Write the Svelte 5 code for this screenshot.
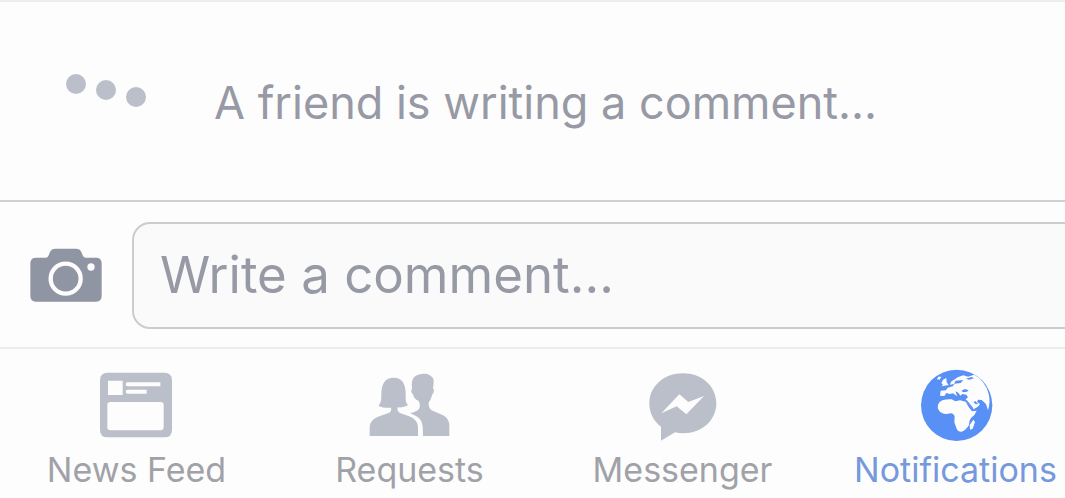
<script>
  let comment = $state('');
  let active = $state('Notifications');
  const tabs = ['News Feed', 'Requests', 'Messenger', 'Notifications'];
</script>

<main>
  <section class="typing" aria-live="polite">
    <svg class="dots" width="82" height="36" viewBox="0 0 82 36" aria-hidden="true">
      <circle cx="12" cy="12" r="10" />
      <circle cx="42" cy="18" r="10" />
      <circle cx="72" cy="25" r="10" />
    </svg>
    <p>A friend is writing a comment...</p>
  </section>

  <form class="composer" onsubmit={(e) => e.preventDefault()}>
    <button type="button" class="camera" aria-label="Add a photo">
      <svg width="72" height="56" viewBox="0 0 216 168" aria-hidden="true">
        <path d="M18 29h30q6 0 8-7l4-10Q64 2 76 2h62q12 0 16 10l4 10q2 7 9 7h31q17 0 17 17v98q0 17-17 17H18q-17 0-17-17V46q0-17 17-17z" />
        <circle class="lens" cx="107" cy="92" r="45" />
        <circle class="flash" cx="183" cy="57" r="11" />
      </svg>
    </button>
    <input type="text" aria-label="Write a comment" placeholder="Write a comment..." bind:value={comment} />
  </form>

  <nav>
    {#each tabs as tab}
      <button
        type="button"
        class:active={active === tab}
        aria-current={active === tab ? 'page' : undefined}
        onclick={() => (active = tab)}
      >
        {#if tab === 'News Feed'}
          <svg width="110" height="90" viewBox="6 0 330 270" aria-hidden="true">
            <path fill-rule="evenodd" d="M83 38h170q23 0 23 23v148q0 23-23 23H83q-23 0-23-23V61q0-23 23-23zM84 62v43h44V62zM143 67q-6 0-6 6t6 6h98V67zM143 89q-6 0-6 6t6 6h57V89zM91 126q-9 0-9 9v67q0 9 9 9h151q9 0 9-9v-67q0-9-9-9z" />
          </svg>
        {:else if tab === 'Requests'}
          <svg width="110" height="90" viewBox="0 0 330 270" aria-hidden="true">
            <path d="M44 228v-26c1-17 13-28 29-33l26-9c9-4 11-10 9-17-13 1-28 0-38-6 8-6 9-17 9-34 0-34 13-50 37-50 24 0 36 16 36 50 0 17 0 26 7 32-9 6-19 8-31 7-2 8 0 14 9 18l25 9c17 6 26 17 27 32v27z" />
            <path d="M204 228c0-31-1-45-15-56-8-6-16-8-24-13 12-2 21-5 27-12 4-6 3-17-1-24-10-4-16-11-17-20-6-3-7-12-3-17-3-31 5-42 34-45 15-1 22 6 27 11 6 7 4 20 2 33 5 5 2 16-3 20-2 10-6 17-10 23 0 14 3 20 14 25l26 11c16 7 22 19 22 34v30z" />
          </svg>
        {:else if tab === 'Messenger'}
          <svg width="110" height="90" viewBox="-21 0 330 270" aria-hidden="true">
            <path fill-rule="evenodd" d="M144 40C86 40 43 80 43 130c0 29 13 54 35 70v42l42-25q11 3 24 3c57 0 100-39 100-90s-43-90-100-90zM79 160l54-57 27 23 47-18-53 55-29-24z" />
          </svg>
        {:else}
          <svg width="110" height="90" viewBox="-13 0 330 270" aria-hidden="true">
            <circle cx="154" cy="136" r="107" />
            <path class="land" d="M111 121Q125 117 139 118L150 124L164 121L181 125L190 141L200 154L214 152Q210 164 197 174Q191 181 191 195Q182 211 169 215Q158 216 154 206L147 187L148 170Q146 161 136 160Q116 165 106 157Q95 148 98 134Q101 125 111 121z" />
            <path class="land" d="M106 92L122 91L127 83L142 79L148 71L166 69L174 60L151 62L146 72L134 74L137 65L157 52L174 46L188 50L207 44Q239 61 250 101Q256 125 248 151L242 132L229 120L218 119L215 126L224 132Q216 145 200 149L185 126L181 118L188 112L183 104L171 102L165 107L159 98L150 94L156 109L143 100L133 102L123 99L117 108L104 107z" />
            <path class="land" d="M113 59L123 54L124 67L130 75L109 79L113 73L108 70zM95 58L99 50L108 50L103 59zM204 179L209 186L202 206L194 209L193 195z" />
            <path class="water" d="M181 56L199 51L206 55L192 59zM168 93L178 87L190 91L185 95L174 97zM181 120L185 121L204 145L201 153zM204 127L210 123L218 132L212 133z" />
          </svg>
        {/if}
        <span>{tab}</span>
      </button>
    {/each}
  </nav>
</main>

<style>
  :global(body) {
    margin: 0;
    background: #fdfdfd;
  }

  main {
    overflow: hidden;
    border-top: 2px solid #ededed;
    font-family: Inter, 'Liberation Sans', sans-serif;
    color: #9799a5;
  }

  .typing {
    display: flex;
    align-items: center;
    gap: 68px;
    padding: 60px 64px 56px;
    border-bottom: 2px solid #d0d1d3;
  }

  .dots {
    flex: none;
    fill: #bbbfca;
    align-self: flex-start;
    margin-top: 10px;
  }

  p {
    margin: 0;
    font-size: 45px;
    line-height: 82px;
    white-space: nowrap;
  }

  button {
    padding: 0;
    border: 0;
    background: none;
    color: inherit;
    font: inherit;
    cursor: pointer;
  }

  svg {
    display: block;
  }

  .composer {
    display: flex;
    align-items: center;
    gap: 30px;
    padding: 20px 0 18px 30px;
    margin-right: -24px;
    border-bottom: 2px solid #ececed;
  }

  .camera {
    flex: none;
    fill: #9095a3;
  }

  .lens {
    fill: none;
    stroke: #fdfdfd;
    stroke-width: 13;
  }

  .flash {
    fill: #fdfdfd;
  }

  input {
    flex: 1;
    min-width: 0;
    box-sizing: border-box;
    height: 107px;
    padding: 0 26px 2px;
    border: 2px solid #cbccce;
    border-radius: 18px;
    background: #fafafa;
    color: #4b4f56;
    font: inherit;
    font-size: 51px;
  }

  input::placeholder {
    color: #9799a5;
    opacity: 1;
  }

  nav {
    display: grid;
    grid-template-columns: repeat(4, 1fr);
    margin-right: -27px;
    padding-top: 11px;
  }

  nav button {
    display: flex;
    flex-direction: column;
    align-items: center;
    fill: #bbbfca;
    color: #a1a2a8;
    font-size: 34px;
    line-height: 40px;
  }

  nav .active {
    fill: #5890f5;
    color: #7599dc;
  }

  .active .land {
    fill: #fdfdfd;
  }

  .land {
    fill: #fdfdfd;
  }

  .active .water {
    fill: #5890f5;
  }
</style>
